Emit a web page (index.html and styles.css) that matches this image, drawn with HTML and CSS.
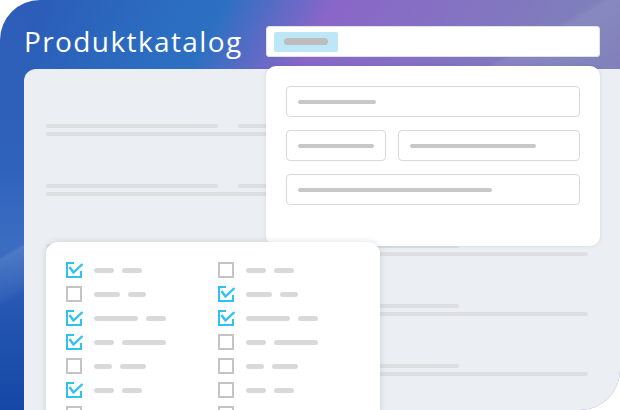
FILE: index.html
```html
<!DOCTYPE html>
<html lang="de">
<head>
<meta charset="utf-8">
<title>Produktkatalog</title>
<link rel="stylesheet" href="styles.css">
</head>
<body>
<div class="frame">
  <header class="top">
    <h1 class="title">Produktkatalog</h1>
    <div class="search"><span class="chip"><span class="chip-pill"></span></span></div>
  </header>

  <section class="panel">
    <div class="row"><div class="line-top"><span class="seg seg-a"></span><span class="seg seg-b"></span></div><span class="seg seg-full"></span></div>
    <div class="row"><div class="line-top"><span class="seg seg-a"></span><span class="seg seg-b"></span></div><span class="seg seg-full"></span></div>
    <div class="row"><div class="line-top"><span class="seg seg-a"></span><span class="seg seg-b"></span></div><span class="seg seg-full"></span></div>
    <div class="row"><div class="line-top"><span class="seg seg-a"></span><span class="seg seg-b"></span></div><span class="seg seg-full"></span></div>
    <div class="row"><div class="line-top"><span class="seg seg-a"></span><span class="seg seg-b"></span></div><span class="seg seg-full"></span></div>
  </section>

  <div class="form-card">
    <div class="field"><span class="fpill" style="width:78px"></span></div>
    <div class="field-row">
      <div class="field field-s"><span class="fpill" style="width:78px"></span></div>
      <div class="field field-l"><span class="fpill" style="width:126px"></span></div>
    </div>
    <div class="field"><span class="fpill" style="width:194px"></span></div>
  </div>

  <div class="check-card">
    <div class="check-col">
      <div class="item"><svg class="cb on" viewBox="0 0 16 16"><path class="box" d="M8 1H1V15H15V9"/><path class="tick" d="M3.5 5L7.5 10.5L16.5 2"/></svg><span class="p" style="width:20px"></span><span class="p" style="width:20px"></span></div>
      <div class="item"><svg class="cb" viewBox="0 0 16 16"><rect class="box" x="1" y="1" width="14" height="14"/></svg><span class="p" style="width:26px"></span><span class="p" style="width:18px"></span></div>
      <div class="item"><svg class="cb on" viewBox="0 0 16 16"><path class="box" d="M8 1H1V15H15V9"/><path class="tick" d="M3.5 5L7.5 10.5L16.5 2"/></svg><span class="p" style="width:44px"></span><span class="p" style="width:20px"></span></div>
      <div class="item"><svg class="cb on" viewBox="0 0 16 16"><path class="box" d="M8 1H1V15H15V9"/><path class="tick" d="M3.5 5L7.5 10.5L16.5 2"/></svg><span class="p" style="width:20px"></span><span class="p" style="width:44px"></span></div>
      <div class="item"><svg class="cb" viewBox="0 0 16 16"><rect class="box" x="1" y="1" width="14" height="14"/></svg><span class="p" style="width:18px"></span><span class="p" style="width:26px"></span></div>
      <div class="item"><svg class="cb on" viewBox="0 0 16 16"><path class="box" d="M8 1H1V15H15V9"/><path class="tick" d="M3.5 5L7.5 10.5L16.5 2"/></svg><span class="p" style="width:20px"></span><span class="p" style="width:20px"></span></div>
      <div class="item"><svg class="cb" viewBox="0 0 16 16"><rect class="box" x="1" y="1" width="14" height="14"/></svg><span class="p" style="width:26px"></span><span class="p" style="width:18px"></span></div>
    </div>
    <div class="check-col">
      <div class="item"><svg class="cb" viewBox="0 0 16 16"><rect class="box" x="1" y="1" width="14" height="14"/></svg><span class="p" style="width:20px"></span><span class="p" style="width:20px"></span></div>
      <div class="item"><svg class="cb on" viewBox="0 0 16 16"><path class="box" d="M8 1H1V15H15V9"/><path class="tick" d="M3.5 5L7.5 10.5L16.5 2"/></svg><span class="p" style="width:26px"></span><span class="p" style="width:18px"></span></div>
      <div class="item"><svg class="cb on" viewBox="0 0 16 16"><path class="box" d="M8 1H1V15H15V9"/><path class="tick" d="M3.5 5L7.5 10.5L16.5 2"/></svg><span class="p" style="width:44px"></span><span class="p" style="width:20px"></span></div>
      <div class="item"><svg class="cb" viewBox="0 0 16 16"><rect class="box" x="1" y="1" width="14" height="14"/></svg><span class="p" style="width:20px"></span><span class="p" style="width:44px"></span></div>
      <div class="item"><svg class="cb" viewBox="0 0 16 16"><rect class="box" x="1" y="1" width="14" height="14"/></svg><span class="p" style="width:18px"></span><span class="p" style="width:26px"></span></div>
      <div class="item"><svg class="cb" viewBox="0 0 16 16"><rect class="box" x="1" y="1" width="14" height="14"/></svg><span class="p" style="width:20px"></span><span class="p" style="width:20px"></span></div>
      <div class="item"><svg class="cb" viewBox="0 0 16 16"><rect class="box" x="1" y="1" width="14" height="14"/></svg><span class="p" style="width:20px"></span><span class="p" style="width:20px"></span></div>
    </div>
  </div>
</div>
</body>
</html>
```
FILE: styles.css
```css
* { box-sizing: border-box; }
html, body { margin: 0; padding: 0; background: #ffffff; }

.frame {
  position: relative;
  width: 620px;
  height: 410px;
  border-radius: 40px 0 40px 0;
  overflow: hidden;
  display: flex;
  flex-direction: column;
  background:
    linear-gradient(150deg, rgba(255,255,255,0) 0, rgba(255,255,255,0) 60%, rgba(255,255,255,0.10) 61%, rgba(255,255,255,0.04) 70%, rgba(255,255,255,0) 72%) no-repeat 0 0 / 30px 100%,
    linear-gradient(180deg, #2d5db8 0, #2f62bb 40%, #3b6dc2 60%, #2456b2 75%, #1548a6 100%) no-repeat 0 0 / 30px 100%,
    linear-gradient(150deg, rgba(255,255,255,0) 0, rgba(255,255,255,0) 45%, rgba(255,255,255,0.07) 46%, rgba(255,255,255,0) 60%),
    linear-gradient(118deg, #2c58b6 0%, #2b6cc0 20%, #2c70c2 27%, #8a66c8 40%, #8472c2 55%, #7d80ba 72%, #8474b4 100%);
}

.top {
  height: 69px;
  flex: none;
  display: flex;
  justify-content: space-between;
  align-items: flex-start;
  padding: 26px 20px 0 24px;
}

.title {
  margin: 1px 0 0 0;
  font-family: "Open Sans", "Liberation Sans", sans-serif;
  font-weight: 400;
  font-size: 28px;
  line-height: 28px;
  letter-spacing: 1.4px;
  color: #ffffff;
}

.search {
  width: 334px;
  height: 31px;
  background: #ffffff;
  border: 1px solid #dfe3ea;
  border-radius: 3px;
  padding: 5px 7px;
  display: flex;
  align-items: flex-start;
}

.chip {
  width: 64px;
  height: 20px;
  border-radius: 2px;
  background: #bde7f6;
  padding: 6px 10px;
  display: flex;
}

.chip-pill {
  width: 44px;
  height: 7px;
  border-radius: 4px;
  background: #bdbdbd;
}

.panel {
  flex: 1;
  margin-left: 24px;
  background: #ebeff3;
  border-radius: 12px 0 0 0;
  padding: 55px 0 0 22px;
  display: flex;
  flex-direction: column;
  gap: 48px;
}

.row {
  display: flex;
  flex-direction: column;
  gap: 4px;
}

.line-top {
  display: flex;
  gap: 20px;
}

.seg {
  display: block;
  height: 4px;
  border-radius: 2px;
  background: #dcdee1;
}
.seg-a { width: 172px; }
.seg-b { width: 221px; }
.seg-full { width: 542px; }

.form-card {
  position: absolute;
  left: 266px;
  top: 66px;
  width: 334px;
  height: 180px;
  background: #ffffff;
  border-radius: 10px;
  box-shadow: 0 0 4px rgba(60, 70, 90, 0.12);
  padding: 20px;
  display: flex;
  flex-direction: column;
  gap: 13px;
}

.field {
  height: 31px;
  border: 1px solid #d9d9d9;
  border-radius: 4px;
  padding: 0 11px;
  display: flex;
  align-items: center;
}

.field-row {
  display: flex;
  gap: 12px;
}
.field-s { width: 100px; }
.field-l { flex: 1; }

.fpill {
  display: block;
  height: 4px;
  border-radius: 2px;
  background: #c8c8c8;
}

.check-card {
  position: absolute;
  left: 46px;
  top: 242px;
  width: 334px;
  height: 200px;
  background: #ffffff;
  border-radius: 12px;
  box-shadow: 0 0 6px rgba(60, 70, 90, 0.18);
  padding: 20px 0 0 20px;
  display: flex;
}

.check-col {
  width: 152px;
  flex: none;
  display: flex;
  flex-direction: column;
  gap: 8px;
}

.item {
  height: 16px;
  display: flex;
  align-items: center;
  gap: 8px;
}

.cb {
  width: 16px;
  height: 16px;
  flex: none;
  margin-right: 4px;
  overflow: visible;
}
.cb .box {
  fill: none;
  stroke: #c4c4c4;
  stroke-width: 2;
}
.cb.on .box {
  stroke: #2ec1f2;
}
.cb .tick {
  fill: none;
  stroke: #2ec1f2;
  stroke-width: 2.4;
}

.p {
  display: block;
  height: 5px;
  border-radius: 3px;
  background: #d9d9d9;
}
```
